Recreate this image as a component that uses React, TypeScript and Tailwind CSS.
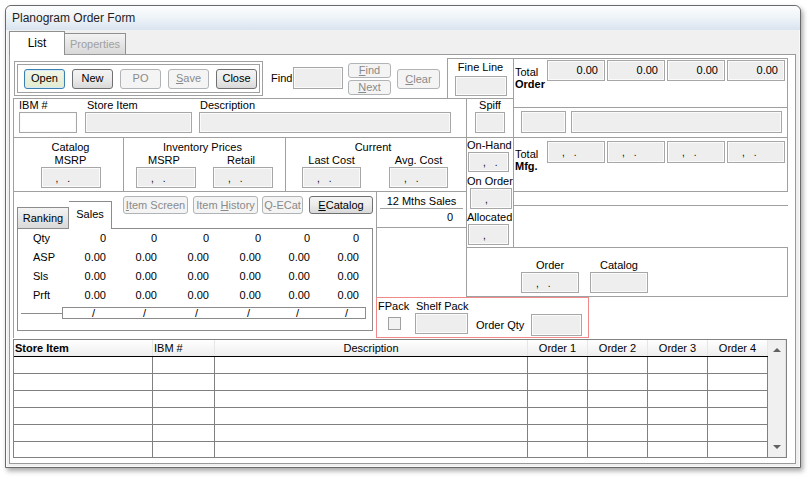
import React from "react";

type Kind = "normal" | "disabled" | "focus";

const Fld = ({
  className = "",
  white = false,
  children,
}: {
  className?: string;
  white?: boolean;
  children?: React.ReactNode;
}) => (
  <div
    className={`border border-[#a7a7a7] shadow-[inset_0_0_0_1px_#fbfbfb] ${
      white ? "bg-white" : "bg-[#eeeeee]"
    } ${className}`}
  >
    {children}
  </div>
);

const Mask = ({ dot = true }: { dot?: boolean }) => (
  <div className="flex h-full items-center gap-[9px] pl-[14px] pt-[2px] text-[10px] leading-none">
    <span>,</span>
    {dot && <span>.</span>}
  </div>
);

const Btn = ({
  className = "",
  kind = "normal",
  children,
}: {
  className?: string;
  kind?: Kind;
  children?: React.ReactNode;
}) => {
  const k =
    kind === "disabled"
      ? "border-[#b0b4b7] bg-[#f4f4f4] text-[#8a8a8a]"
      : kind === "focus"
      ? "border-[#3c7fb1] bg-linear-to-b from-[#f2f7e6] to-[#e2ebcf] shadow-[inset_0_0_0_1px_#d6eaf8]"
      : "border-[#707070] bg-linear-to-b from-[#f4f4f4] via-[#ebebeb] to-[#d9d9d9]";
  return (
    <div
      className={`flex items-center justify-center whitespace-nowrap rounded-[3px] border leading-none ${k} ${className}`}
    >
      {children}
    </div>
  );
};

const salesRows: [string, string][] = [
  ["Qty", "0"],
  ["ASP", "0.00"],
  ["Sls", "0.00"],
  ["Prft", "0.00"],
];
const colW = ["w-[51px]", "w-[51px]", "w-[52px]", "w-[52px]", "w-[49px]", "w-[49px]"];
const slashW = ["w-[44px]", "w-[51px]", "w-[52px]", "w-[52px]", "w-[49px]", "w-[49px]"];

const GridRow = ({ last = false }: { last?: boolean }) => (
  <div className={`flex ${last ? "h-[15px]" : "h-[17px] border-b border-[#808080]"}`}>
    <div className="w-[139px] border-r border-[#808080]" />
    <div className="w-[62px] border-r border-[#808080]" />
    <div className="w-[313px] border-r border-[#808080]" />
    <div className="w-[60px] border-r border-[#808080]" />
    <div className="w-[60px] border-r border-[#808080]" />
    <div className="w-[60px] border-r border-[#808080]" />
    <div className="w-[60px] border-r border-[#808080]" />
  </div>
);

export default function App() {
  return (
    <div className="h-[479px] w-[810px] overflow-hidden bg-white pl-[5px] pt-[5px] font-['Liberation_Sans',Arial,sans-serif] text-[11px] leading-[13px] text-black">
      <div className="flex h-[463px] w-[796px] flex-col rounded-t-[6px] border border-[#6a6a6a] bg-[#f0f0f0] shadow-[inset_0_0_0_1px_#fafafa,2px_3px_5px_rgba(0,0,0,0.35)]">
        {/* title bar */}
        <div className="flex h-[24px] items-center rounded-t-[6px] bg-linear-to-b from-[#fcfdfe] via-[#eef3f8] to-[#d9e4f0] pl-[6px] text-[12px] text-[#1e1e1e]">
          Planogram Order Form
        </div>
        {/* tabs */}
        <div className="flex h-[24px] items-end pl-[3px]">
          <div className="relative z-10 -mb-px flex h-[24px] w-[56px] items-center justify-center border border-b-0 border-[#8e8f8f] bg-white text-[12px]">
            List
          </div>
          <div className="flex h-[21px] w-[61px] items-center justify-center border border-b-0 border-l-0 border-[#8e8f8f] bg-linear-to-b from-[#f3f3f3] to-[#d8d8d8] text-[#a0a0a0]">
            Properties
          </div>
        </div>
        {/* panel */}
        <div className="ml-[3px] h-[410px] w-[787px] border border-[#9a9a9a] bg-white pl-[3px] pt-[3px]">
          <div className="grid grid-cols-[363px_90px_47px_76px_199px] grid-rows-[40px_10px_29px_55px_55px_50px_41px]">
            {/* A: toolbar row */}
            <div className="col-span-3 col-start-1 row-start-1 flex">
              <div className="ml-[1px] mt-[3px] h-[35px] w-[249px] border border-[#a0a0a0] p-[2px]">
                <div className="flex h-full items-center gap-[7px] border border-[#a0a0a0] pl-[6px]">
                  <Btn kind="focus" className="h-[20px] w-[41px]">
                    Open
                  </Btn>
                  <Btn className="h-[20px] w-[41px]">New</Btn>
                  <Btn kind="disabled" className="h-[20px] w-[41px]">
                    PO
                  </Btn>
                  <Btn kind="disabled" className="h-[20px] w-[41px]">
                    <span>
                      <u>S</u>ave
                    </span>
                  </Btn>
                  <Btn className="h-[20px] w-[41px]">Close</Btn>
                </div>
              </div>
              <div className="ml-[8px] w-[22px] self-center">Find</div>
              <Fld className="h-[22px] w-[50px] self-center" />
              <div className="ml-[5px] mt-[5px] flex flex-col gap-[2px]">
                <Btn kind="disabled" className="h-[15px] w-[43px]">
                  <span>
                    <u>F</u>ind
                  </span>
                </Btn>
                <Btn kind="disabled" className="h-[15px] w-[43px]">
                  <span>
                    <u>N</u>ext
                  </span>
                </Btn>
              </div>
              <Btn kind="disabled" className="ml-[6px] mt-[11px] h-[20px] w-[43px]">
                <span>
                  <u>C</u>lear
                </span>
              </Btn>
              <div className="ml-[7px] flex h-full w-[66px] flex-col items-center border-l border-t border-[#a0a0a0]">
                <div className="mt-[2px] leading-[13px]">Fine Line</div>
                <Fld className="mt-[2px] h-[20px] w-[52px]" />
              </div>
            </div>

            {/* B: Total Order */}
            <div className="col-span-2 col-start-4 row-span-2 row-start-1 flex border border-[#a0a0a0]">
              <div className="w-[33px] pl-[1px] pt-[7px] leading-[12px]">
                <div>Total</div>
                <div className="font-bold">Order</div>
              </div>
              <div className="flex gap-[2px] pt-[1px]">
                {[0, 1, 2, 3].map((i) => (
                  <Fld key={i} className="flex h-[21px] w-[58px] items-center justify-end pr-[6px]">
                    0.00
                  </Fld>
                ))}
              </div>
            </div>

            {/* C: IBM row */}
            <div className="col-span-3 col-start-1 row-span-2 row-start-2 flex border-l border-t border-[#a0a0a0]">
              <div className="flex w-[452px] pl-[5px]">
                <div className="flex flex-col">
                  <div className="h-[13px]">IBM #</div>
                  <Fld white className="h-[21px] w-[58px]" />
                </div>
                <div className="ml-[8px] flex flex-col">
                  <div className="h-[13px] pl-[2px]">Store Item</div>
                  <Fld className="h-[21px] w-[107px]" />
                </div>
                <div className="ml-[7px] flex flex-col">
                  <div className="h-[13px] pl-[1px]">Description</div>
                  <Fld className="h-[21px] w-[252px]" />
                </div>
              </div>
              <div className="flex w-[47px] flex-col items-center border-l border-[#a0a0a0]">
                <div className="h-[13px]">Spiff</div>
                <Fld className="h-[21px] w-[30px]" />
              </div>
            </div>

            {/* D: right inputs */}
            <div className="col-span-2 col-start-4 row-start-3 flex gap-[5px] border-l border-r border-[#a0a0a0] pl-[7px] pt-[3px]">
              <Fld className="h-[22px] w-[45px]" />
              <Fld className="h-[22px] w-[211px]" />
            </div>

            {/* E: prices row */}
            <div className="col-span-2 col-start-1 row-start-4 flex border-b border-l border-t border-[#a0a0a0]">
              <div className="flex w-[110px] flex-col items-center border-r border-[#a0a0a0] pl-[4px] pt-[3px]">
                <div>Catalog</div>
                <div>MSRP</div>
                <Fld className="h-[21px] w-[60px]">
                  <Mask />
                </Fld>
              </div>
              <div className="flex w-[162px] flex-col border-r border-[#a0a0a0] pt-[3px]">
                <div className="pr-[4px] text-center">Inventory Prices</div>
                <div className="flex gap-[17px] pl-[12px]">
                  <div className="flex w-[60px] flex-col items-center">
                    <div className="pr-[4px]">MSRP</div>
                    <Fld className="h-[21px] w-[60px]">
                      <Mask />
                    </Fld>
                  </div>
                  <div className="flex w-[60px] flex-col items-center">
                    <div className="pr-[4px]">Retail</div>
                    <Fld className="h-[21px] w-[60px]">
                      <Mask />
                    </Fld>
                  </div>
                </div>
              </div>
              <div className="flex w-[180px] flex-col pt-[3px]">
                <div className="pr-[6px] text-center">Current</div>
                <div className="flex gap-[28px] pl-[16px]">
                  <div className="flex w-[59px] flex-col items-center">
                    <div>Last Cost</div>
                    <Fld className="h-[21px] w-[59px]">
                      <Mask />
                    </Fld>
                  </div>
                  <div className="flex w-[59px] flex-col items-center">
                    <div className="whitespace-nowrap">Avg. Cost</div>
                    <Fld className="h-[21px] w-[59px]">
                      <Mask />
                    </Fld>
                  </div>
                </div>
              </div>
            </div>

            {/* F: on-hand column */}
            <div className="col-start-3 row-span-2 row-start-4 flex flex-col border-l border-t border-[#a0a0a0]">
              <div className="mt-[1px] whitespace-nowrap">On-Hand</div>
              <Fld className="ml-[1px] h-[20px] w-[41px]">
                <Mask />
              </Fld>
              <div className="mt-[3px] whitespace-nowrap">On Order</div>
              <Fld className="ml-[3px] h-[21px] w-[42px]">
                <Mask dot={false} />
              </Fld>
              <div className="mt-[2px] whitespace-nowrap">Allocated</div>
              <Fld className="ml-[1px] h-[21px] w-[41px]">
                <Mask dot={false} />
              </Fld>
            </div>

            {/* G: Total Mfg */}
            <div className="col-span-2 col-start-4 row-start-4 flex border border-[#a0a0a0]">
              <div className="w-[33px] pl-[1px] pt-[10px] leading-[12px]">
                <div>Total</div>
                <div className="font-bold">Mfg.</div>
              </div>
              <div className="flex gap-[2px] pt-[3px]">
                {[0, 1, 2, 3].map((i) => (
                  <Fld key={i} className="h-[22px] w-[58px]">
                    <Mask />
                  </Fld>
                ))}
              </div>
            </div>

            {/* J: empty band */}
            <div className="col-span-2 col-start-4 row-start-5 border-l border-[#a0a0a0]">
              <div className="h-[14px] border-b border-[#a0a0a0]" />
            </div>

            {/* I: 12 months sales */}
            <div className="col-start-2 row-span-2 row-start-5 border-l border-[#a0a0a0]">
              <div className="flex h-[36px] flex-col border-b border-[#a0a0a0]">
                <div className="mx-[3px] mt-[3px] h-[14px] border-b border-[#a0a0a0] text-center">12 Mths Sales</div>
                <div className="mt-[2px] pr-[13px] text-right">0</div>
              </div>
            </div>

            {/* K: Order / Catalog */}
            <div className="col-span-3 col-start-3 row-start-6 flex gap-[11px] border border-[#a0a0a0] pl-[54px] pt-[11px]">
              <div className="flex flex-col items-center">
                <div>Order</div>
                <Fld className="h-[21px] w-[58px]">
                  <Mask />
                </Fld>
              </div>
              <div className="flex flex-col items-center">
                <div>Catalog</div>
                <Fld className="h-[21px] w-[58px]" />
              </div>
            </div>

            {/* L: FPack */}
            <div className="col-span-3 col-start-2 row-start-7 flex border border-[#f08a8a] pt-[2px]">
              <div className="flex w-[38px] flex-col pl-[1px]">
                <div>FPack</div>
                <div className="ml-[10px] mt-[4px] h-[13px] w-[13px] border border-[#a0a0a0] bg-[#f2f2f2]" />
              </div>
              <div className="flex w-[53px] flex-col">
                <div className="whitespace-nowrap pl-[1px]">Shelf Pack</div>
                <Fld className="h-[21px] w-[53px]" />
              </div>
              <div className="ml-[8px] mt-[19px] whitespace-nowrap">Order Qty</div>
              <Fld className="ml-[7px] mt-[14px] h-[22px] w-[51px]" />
            </div>

            {/* H: sales area */}
            <div className="col-start-1 row-span-3 row-start-5 border-l border-[#a0a0a0] pl-[3px]">
              <div className="flex h-[36px] items-end">
                <div className="flex h-[21px] w-[52px] items-center justify-center border border-b-0 border-[#8c8c8c] bg-linear-to-b from-[#f4f4f4] to-[#d9d9d9]">
                  Ranking
                </div>
                <div className="relative z-10 -mb-px flex h-[28px] w-[43px] justify-center border border-b-0 border-l-0 border-[#8c8c8c] bg-white pt-[6px]">
                  Sales
                </div>
                <div className="ml-[11px] mt-[4px] flex self-start">
                  <Btn kind="disabled" className="h-[18px] w-[65px]">
                    <span>
                      <u>I</u>tem Screen
                    </span>
                  </Btn>
                  <Btn kind="disabled" className="ml-[5px] h-[18px] w-[65px]">
                    <span>
                      Item <u>H</u>istory
                    </span>
                  </Btn>
                  <Btn kind="disabled" className="ml-[4px] h-[18px] w-[41px]">
                    Q-ECat
                  </Btn>
                  <Btn className="ml-[6px] h-[18px] w-[64px]">
                    <span>
                      <u>E</u>Catalog
                    </span>
                  </Btn>
                </div>
              </div>
              <div className="h-[103px] w-[356px] border border-[#8c8c8c]">
                {salesRows.map(([label, v]) => (
                  <div key={label} className="flex h-[19px] items-center pl-[15px]">
                    <div className="w-[22px]">{label}</div>
                    {colW.map((w, i) => (
                      <div key={i} className={`${w} text-right`}>
                        {v}
                      </div>
                    ))}
                  </div>
                ))}
                <div className="mt-[2px] flex items-center">
                  <div className="ml-[3px] h-px w-[41px] bg-[#8c8c8c]" />
                  <div className="flex h-[12px] w-[304px] items-center border border-[#8c8c8c]">
                    {slashW.map((w, i) => (
                      <div key={i} className={`${w} pr-[12px] text-right leading-[10px]`}>
                        /
                      </div>
                    ))}
                  </div>
                </div>
              </div>
            </div>
          </div>

          {/* data grid */}
          <div className="mt-px flex h-[119px] w-[774px] border border-[#828282] bg-white">
            <div className="flex w-[754px] flex-col">
              <div className="flex h-[17px] border-b border-black bg-linear-to-b from-[#ffffff] to-[#eeeeee] leading-[16px]">
                <div className="w-[139px] border-r border-[#e6e6e6] pl-[1px] font-bold">Store Item</div>
                <div className="w-[62px] border-r border-[#e6e6e6] pl-[1px]">IBM #</div>
                <div className="w-[313px] border-r border-[#e6e6e6] text-center">Description</div>
                <div className="w-[60px] border-r border-[#e6e6e6] text-center">Order 1</div>
                <div className="w-[60px] border-r border-[#e6e6e6] text-center">Order 2</div>
                <div className="w-[60px] border-r border-[#e6e6e6] text-center">Order 3</div>
                <div className="w-[60px] border-r border-[#e6e6e6] text-center">Order 4</div>
              </div>
              <GridRow />
              <GridRow />
              <GridRow />
              <GridRow />
              <GridRow />
              <GridRow last />
            </div>
            <div className="flex w-[18px] flex-col items-center justify-between border-r border-[#e2e2e2] bg-[#f0f0f0] py-[8px]">
              <div className="h-0 w-0 border-b-[4px] border-l-[4px] border-r-[4px] border-b-[#606060] border-l-transparent border-r-transparent" />
              <div className="h-0 w-0 border-l-[4px] border-r-[4px] border-t-[4px] border-l-transparent border-r-transparent border-t-[#606060]" />
            </div>
          </div>
        </div>
      </div>
    </div>
  );
}
